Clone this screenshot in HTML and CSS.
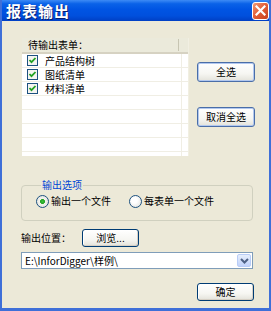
FILE: index.html
```html
<!DOCTYPE html>
<html lang="zh-CN">
<head>
    <meta charset="UTF-8">
    <title>报表输出</title>
    <link rel="stylesheet" href="styles.css">
</head>
<body>
    <div class="window">
        <div class="titlebar">
            <span class="title">报表输出</span>
            <span class="close">
                <svg width="11" height="11" viewBox="0 0 11 11"><path d="M1.5 1.5 L9.5 9.5 M9.5 1.5 L1.5 9.5" stroke="#fff" stroke-width="2.2" stroke-linecap="square"/></svg>
            </span>
        </div>
        <div class="content">
            <div class="top">
                <div class="list">
                    <div class="list-head"><span class="head-cell">待输出表单：</span></div>
                    <div class="row"><span class="check"></span>产品结构树</div>
                    <div class="row"><span class="check"></span>图纸清单</div>
                    <div class="row"><span class="check"></span>材料清单</div>
                    <div class="row"></div>
                    <div class="row"></div>
                    <div class="row"></div>
                    <div class="row"></div>
                    <div class="row"></div>
                </div>
                <div class="side">
                    <button class="btn btn-tall">全选</button>
                    <button class="btn btn-tall">取消全选</button>
                </div>
            </div>

            <fieldset class="group">
                <legend>输出选项</legend>
                <label class="radio"><span class="dot on"></span>输出一个文件</label>
                <label class="radio"><span class="dot"></span>每表单一个文件</label>
            </fieldset>

            <div class="loc">
                <span>输出位置：</span>
                <button class="btn">浏览...</button>
            </div>

            <div class="combo">
                <span class="path">E:\InforDigger\样例\</span>
                <span class="drop">
                    <svg width="9" height="6" viewBox="0 0 9 6"><path d="M1 1 L4.5 4.5 L8 1" fill="none" stroke="#4d6185" stroke-width="2"/></svg>
                </span>
            </div>

            <div class="bottom">
                <button class="btn">确定</button>
            </div>
        </div>
    </div>
</body>
</html>
```
FILE: styles.css
```css
body {
    margin: 0;
    background: #ece9d8;
    font-family: "Noto Sans CJK SC", "Liberation Sans", sans-serif;
    font-size: 10px;
    line-height: 14px;
    color: #000;
}
.window {
    width: 271px;
    height: 311px;
    box-sizing: border-box;
    border: 2px solid #3f6fd8;
    border-top: none;
    border-bottom-width: 3px;
    background: #ece9d8;
    overflow: hidden;
}
.titlebar {
    height: 21px;
    margin: 0 -2px;
    display: flex;
    align-items: center;
    justify-content: space-between;
    padding: 0 2px 0 6px;
    background: linear-gradient(#3d8bf5 0%, #0a62e8 18%, #0054e3 45%, #0050dd 75%, #003fc4 100%);
}
.title {
    color: #fff;
    font-weight: bold;
    font-size: 15px;
    line-height: 20px;
    letter-spacing: 1px;
    text-shadow: 1px 1px 0 #0a1e6e;
}
.close {
    width: 15px;
    height: 16px;
    border: 1px solid #fff;
    border-radius: 3px;
    background: linear-gradient(135deg, #f19b79 0%, #e2603a 45%, #c8401c 100%);
    display: flex;
    align-items: center;
    justify-content: center;
}
.content {
    padding: 17px 14px 0 19px;
}
.top {
    display: flex;
    gap: 8px;
}
.list {
    width: 168px;
    height: 118px;
    margin-left: 1px;
    background: #fff;
    overflow: hidden;
    box-sizing: border-box;
    border-right: 1px solid #f1efe2;
}
.list-head {
    height: 14px;
    background: #ebeadb;
    border-bottom: 2px solid #d6d2c2;
    display: flex;
    align-items: center;
}
.head-cell {
    width: 157px;
    padding-left: 6px;
    box-sizing: border-box;
    height: 12px;
    line-height: 12px;
    border-right: 1px solid #c7c5b2;
}
.row {
    height: 13px;
    border-bottom: 1px solid #f0eee4;
    display: flex;
    align-items: center;
    padding-left: 5px;
    line-height: 13px;
    overflow: hidden;
    background: linear-gradient(to right, #fff 159px, #f0eee4 159px, #f0eee4 160px, #fff 160px);
}
.check {
    width: 9px;
    height: 9px;
    flex: none;
    border: 1px solid #1c5180;
    margin-right: 7px;
    background: #f4f4f0 url("data:image/svg+xml,%3Csvg xmlns='http://www.w3.org/2000/svg' width='9' height='9'%3E%3Cpath d='M1.5 4 L3.5 6.2 L7.5 2' fill='none' stroke='%2321a121' stroke-width='1.8'/%3E%3C/svg%3E") no-repeat center;
}
.side {
    display: flex;
    flex-direction: column;
    gap: 25px;
    padding-top: 24px;
}
.btn {
    font-family: inherit;
    font-size: 10px;
    color: #000;
    width: 57px;
    height: 18px;
    padding: 0;
    border: 1px solid #003c74;
    border-radius: 3px;
    background: linear-gradient(#ffffff 0%, #f6f6f2 60%, #e3e2da 100%);
    box-shadow: inset -1px -1px 0 #d6d0c5, inset 1px 1px 0 #fff;
    line-height: 16px;
}
.btn-tall {
    width: 58px;
    height: 20px;
    border-color: #4a6ea8;
    box-shadow: inset 0 0 0 1px #b2c8ef;
}
.group {
    margin: 22px 0 0 0;
    padding: 2px 0 0 14px;
    width: 232px;
    height: 43px;
    box-sizing: border-box;
    border: 1px solid #d0d0bf;
    border-radius: 4px;
    display: flex;
}
.group legend {
    color: #0046d5;
    padding: 0 1px;
    margin-left: 5px;
    line-height: 14px;
}
.radio {
    display: flex;
    align-items: center;
    width: 93px;
    height: 14px;
    white-space: nowrap;
}
.dot {
    width: 11px;
    height: 11px;
    flex: none;
    border-radius: 50%;
    border: 1px solid #1c5180;
    margin-right: 2px;
    background: radial-gradient(circle at 40% 40%, #ffffff 30%, #dcdcd6 100%);
}
.dot.on {
    background: radial-gradient(circle, #3cc43c 0%, #21a121 28%, #f4f4f0 33%, #e0e0da 100%);
}
.loc {
    display: flex;
    align-items: center;
    margin-top: 8px;
}
.loc span {
    width: 61px;
}
.combo {
    margin-top: 5px;
    width: 232px;
    height: 17px;
    box-sizing: border-box;
    border: 1px solid #7f9db9;
    background: #fff;
    display: flex;
    align-items: center;
    justify-content: space-between;
}
.path {
    padding-left: 3px;
    line-height: 15px;
}
.drop {
    width: 14px;
    height: 13px;
    margin-right: 1px;
    border-radius: 2px;
    background: linear-gradient(#e6eefc 0%, #c1d3fb 100%);
    border: 1px solid #b9cdf7;
    box-sizing: border-box;
    display: flex;
    align-items: center;
    justify-content: center;
}
.bottom {
    display: flex;
    justify-content: flex-end;
    margin-top: 14px;
    padding-right: 1px;
}
```
